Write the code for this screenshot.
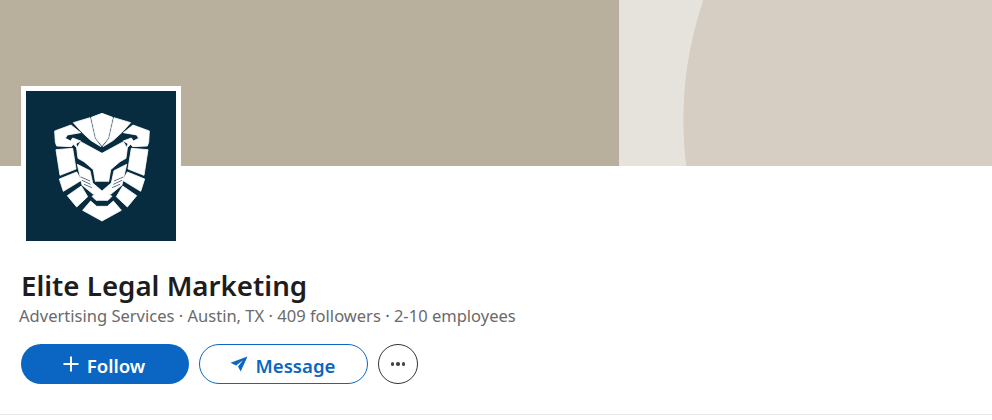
<div class="page">
  <div class="banner">
    <div class="banner-left"></div>
    <div class="banner-right"></div>
  </div>
  <div class="content">
    <div class="logo">
      <svg viewBox="0 0 150 150" width="150" height="150" aria-hidden="true">
        <g transform="translate(14 14) scale(.33333)" fill="#fff" stroke="#fff" stroke-width="2.5" stroke-linejoin="round">
          <defs>
            <g id="half">
              <path d="M100 53 150 38 164 100 183 125 152 106 126 82z"/>
              <path d="M44 78 93 60 122 83 82 90 76 100 92 108 98 99 122 108 108 116 112 130 100 118 94 125 50 123 46 112z"/>
              <path d="M48 134 98 130 108 192 60 211z"/>
              <path d="M58 222 110 201 124 226 70 259z"/>
              <path d="M82 272 124 243 143 275 110 306z"/>
              <path d="M110 130 122 110 186 145V230H166L160 194 132 170 114 160z"/>
              <path d="M112 178 150 197 158 234 186 258V264L160 268 126 240z"/>
            </g>
          </defs>
          <use href="#half"/>
          <use href="#half" transform="matrix(-1 0 0 1 372 0)"/>
          <path d="M154 37 186 25 218 37 204 100 186 122 168 100z"/>
          <path d="M156 274 172 264H200L216 274 204 286H168z"/>
          <path d="M128 316 152 288 170 304H202L220 288 244 316 186 348z"/>
          <g fill="none" stroke="#072c3f" stroke-width="2">
            <path d="M126 226 152 238M132 238 156 248M122 216 150 228"/>
            <path d="M246 226 220 238M240 238 216 248M250 216 222 228"/>
          </g>
          <path d="M166 230H206L186 250z" fill="#072c3f" stroke="none"/>
        </g>
      </svg>
    </div>
    <h1>Elite Legal Marketing</h1>
    <p class="meta">Advertising Services · Austin, TX · 409 followers <span class="dot">·</span> 2-10 employees</p>
    <div class="actions">
      <button class="btn primary">
        <svg viewBox="0 0 16 16" width="16" height="16"><path d="M15.5 7H9V.5H7V7H.5v2H7v6.5h2V9h6.5z" fill="currentColor"/></svg>
        <span>Follow</span>
      </button>
      <button class="btn secondary">
        <svg viewBox="0 0 18 16" width="18" height="16"><path d="M17.5.5.5 6.8l5.6 2.6L13 4.2 8 10.6l2.7 5z" fill="currentColor"/></svg>
        <span>Message</span>
      </button>
      <button class="more" aria-label="More">
        <i></i><i></i><i></i>
      </button>
    </div>
  </div>
  <div class="rule"></div>
</div>

<style>
  :global(body) { margin: 0; background: #fff; }
  .page { width: 992px; height: 420px; overflow: hidden; font-family: "Noto Sans", "Open Sans", sans-serif; }
  .banner { display: flex; height: 166px; }
  .banner-left { width: 619px; background: #b9af9d; }
  .banner-right { flex: 1; background: radial-gradient(circle 370px at 434px 120px, #d6cec3 99.8%, #e6e2dc 100%); }
  .content { padding-left: 21px; height: 248px; display: flow-root; }
  .logo { position: relative; width: 150px; height: 150px; margin-top: -80px; border: 5px solid #fff; background: #072c3f; }
  .logo svg { display: block; }
  h1 { margin: 19px 0 0; font-size: 27.7px; line-height: 40px; font-weight: 600; color: #1d1d1d; }
  .meta { margin: 0 0 0 -2px; font-size: 16.55px; line-height: 22px; color: #6a6a6a; }
  .dot { color: #0a66c2; }
  .actions { display: flex; gap: 10px; margin-top: 17px; }
  .btn { height: 40px; width: 168px; border-radius: 20px; font: 600 18.6px "Noto Sans", sans-serif; display: flex; align-items: center; justify-content: center; gap: 8px; padding: 0 2px 0 0; }
  .btn span { position: relative; top: 1px; }
  .primary { background: #0a66c2; color: #fff; border: 0; }
  .secondary { width: 169px; background: #fff; color: #0a66c2; border: 1px solid #0a66c2; }
  .more { width: 40px; height: 40px; border-radius: 50%; border: 1px solid #333; background: #fff; display: flex; align-items: center; justify-content: center; gap: 2px; padding: 0; }
  .more i { width: 3.5px; height: 3.5px; border-radius: 50%; background: #444; }
  .rule { height: 1px; background: #e8e8e8; }
</style>
